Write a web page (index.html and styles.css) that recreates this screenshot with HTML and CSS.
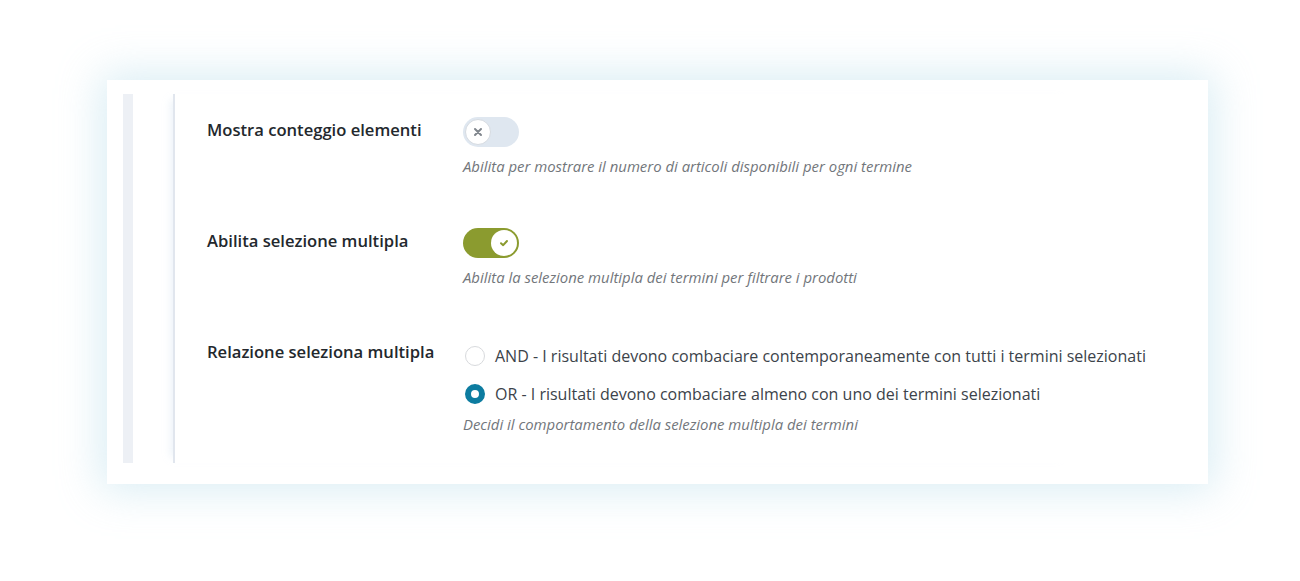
FILE: index.html
```html
<!DOCTYPE html>
<html lang="it">
<head>
<meta charset="utf-8">
<title>Impostazioni filtro</title>
<link rel="stylesheet" href="styles.css">
</head>
<body>
<div class="page">
  <div class="card">
    <div class="bar"></div>
    <div class="panel">
      <div class="row">
        <div class="label">Mostra conteggio elementi</div>
        <div class="field">
          <div class="toggle off">
            <span class="knob">
              <svg width="10" height="10" viewBox="0 0 10 10"><path d="M2 2 L8 8 M8 2 L2 8" stroke="#80868d" stroke-width="2" stroke-linecap="round"/></svg>
            </span>
          </div>
          <p class="desc">Abilita per mostrare il numero di articoli disponibili per ogni termine</p>
        </div>
      </div>
      <div class="row">
        <div class="label">Abilita selezione multipla</div>
        <div class="field">
          <div class="toggle on">
            <span class="knob">
              <svg width="10" height="10" viewBox="0 0 10 10"><path d="M2 5.2 L4.2 7.2 L8 3" fill="none" stroke="#8a9a2e" stroke-width="2" stroke-linecap="round" stroke-linejoin="round"/></svg>
            </span>
          </div>
          <p class="desc">Abilita la selezione multipla dei termini per filtrare i prodotti</p>
        </div>
      </div>
      <div class="row">
        <div class="label">Relazione seleziona multipla</div>
        <div class="field">
          <label class="radio"><span class="dot"></span>AND - I risultati devono combaciare contemporaneamente con tutti i termini selezionati</label>
          <label class="radio"><span class="dot checked"></span>OR - I risultati devono combaciare almeno con uno dei termini selezionati</label>
          <p class="desc">Decidi il comportamento della selezione multipla dei termini</p>
        </div>
      </div>
    </div>
  </div>
</div>
</body>
</html>
```

FILE: styles.css
```css
html, body {
  margin: 0;
  padding: 0;
  background: #ffffff;
}
.page {
  padding: 80px 0 97px 107px;
  font-family: "Open Sans", "Noto Sans", sans-serif;
}
.card {
  width: 1101px;
  height: 404px;
  box-sizing: border-box;
  background: #ffffff;
  box-shadow: 0 0 40px 6px rgba(170, 215, 230, 0.45);
  padding: 14px 0 0 16px;
  display: flex;
  align-items: flex-start;
}
.bar {
  width: 10px;
  height: 369px;
  background: #edf0f5;
  flex: none;
}
.panel {
  margin-left: 40px;
  width: 900px;
  height: 369px;
  border-left: 2px solid #e1e6ee;
  box-shadow: -8px 0 8px -6px rgba(225, 235, 245, 0.7);
  box-sizing: border-box;
  padding: 23px 0 0 32px;
}
.row {
  display: flex;
  height: 111px;
}
.label {
  width: 256px;
  flex: none;
  font-weight: 600;
  font-size: 16.6px;
  line-height: 26px;
  color: #23282d;
}
.field {
  display: flex;
  flex-direction: column;
  align-items: flex-start;
  flex: none;
  width: 720px;
}
.toggle {
  width: 56px;
  height: 30px;
  border-radius: 15px;
  box-sizing: border-box;
  padding: 2px;
  display: flex;
}
.toggle.off {
  background: #dfe7f0;
  justify-content: flex-start;
}
.toggle.on {
  background: #8b9b2f;
  justify-content: flex-end;
}
.knob {
  width: 26px;
  height: 26px;
  border-radius: 50%;
  background: #ffffff;
  box-sizing: border-box;
  display: flex;
  align-items: center;
  justify-content: center;
}
.toggle.off .knob {
  border: 1px solid #d6dbe1;
}
.desc {
  margin: 9px 0 0 0;
  font-style: italic;
  font-size: 14.9px;
  line-height: 20px;
  color: #72767b;
  white-space: nowrap;
}
.radio {
  display: flex;
  align-items: center;
  height: 38px;
  font-size: 16px;
  color: #3c434a;
  margin-top: -2px;
  white-space: nowrap;
}
.radio + .radio {
  margin-top: 0;
}
.dot {
  width: 20px;
  height: 20px;
  box-sizing: border-box;
  border-radius: 50%;
  border: 1px solid #d8dadd;
  margin: 0 10px 0 2px;
  flex: none;
}
.dot.checked {
  border: 6px solid #0d7ca0;
  background: #ffffff;
}
.row:last-child .desc {
  margin-top: 1px;
}
```
